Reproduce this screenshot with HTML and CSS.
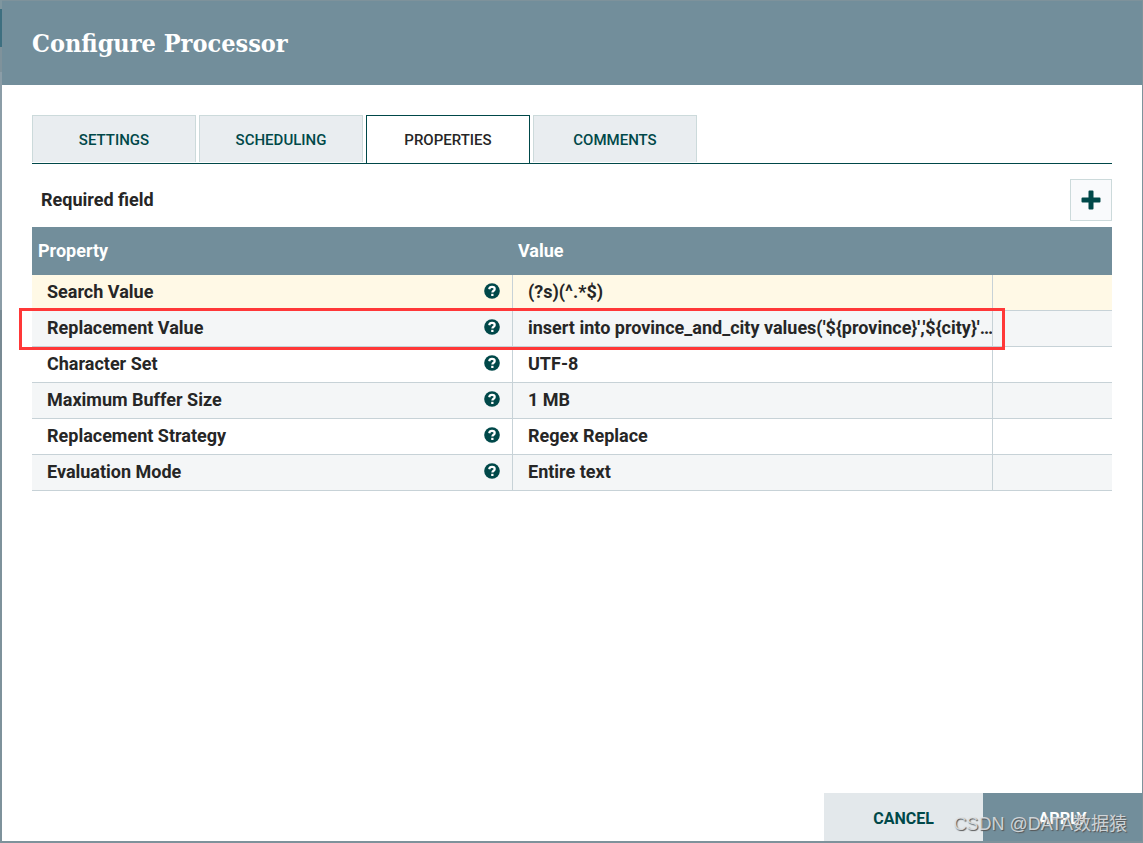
FILE: index.html
```html
<!DOCTYPE html>
<html lang="en">
<head>
<meta charset="utf-8">
<title>Configure Processor</title>
<link rel="stylesheet" href="styles.css">
</head>
<body>
<svg class="defs" aria-hidden="true">
  <symbol id="help" viewBox="0 0 16 16">
    <circle cx="8" cy="8" r="7.800" fill="#004849"/>
    <path d="M5.200 6.200C5.500 4.600 6.500 3.900 8 3.900c1.600 0 2.700.8 2.700 2.100 0 1.800-2.300 1.700-2.300 3.500" fill="none" stroke="#fff" stroke-width="2.200"/>
    <rect x="7.200" y="10.800" width="2.300" height="2.200" fill="#fff"/>
  </symbol>
</svg>
<main class="dialog">
  <header class="dialog-header"><h1>Configure Processor</h1></header>
  <div class="dialog-content">
    <nav class="tabs" role="tablist">
      <button class="tab" role="tab">SETTINGS</button>
      <button class="tab" role="tab">SCHEDULING</button>
      <button class="tab selected" role="tab" aria-selected="true">PROPERTIES</button>
      <button class="tab" role="tab">COMMENTS</button>
    </nav>
    <div class="toolbar">
      <span>Required field</span>
      <button class="add" aria-label="Add property"><svg viewBox="0 0 20 20" width="20" height="20"><path d="M8.500.5h3q1 0 1 1V7.500h6q1 0 1 1v3q0 1-1 1h-6v6q0 1-1 1h-3q-1 0-1-1v-6h-6q-1 0-1-1v-3q0-1 1-1h6v-6q0-1 1-1z" fill="#004849"/></svg></button>
    </div>
    <table class="properties">
      <thead><tr><th class="name">Property</th><th class="value">Value</th><th></th></tr></thead>
      <tbody>
        <tr class="active"><td><div class="cell">Search Value<svg class="help"><use href="#help"/></svg></div></td><td>(?s)(^.*$)</td><td></td></tr>
        <tr class="marked"><td><div class="cell">Replacement Value<svg class="help"><use href="#help"/></svg></div></td><td>insert into province_and_city values('${province}','${city}'…</td><td></td></tr>
        <tr><td><div class="cell">Character Set<svg class="help"><use href="#help"/></svg></div></td><td>UTF-8</td><td></td></tr>
        <tr><td><div class="cell">Maximum Buffer Size<svg class="help"><use href="#help"/></svg></div></td><td>1 MB</td><td></td></tr>
        <tr><td><div class="cell">Replacement Strategy<svg class="help"><use href="#help"/></svg></div></td><td>Regex Replace</td><td></td></tr>
        <tr><td><div class="cell">Evaluation Mode<svg class="help"><use href="#help"/></svg></div></td><td>Entire text</td><td></td></tr>
      </tbody>
    </table>
  </div>
  <footer class="actions">
    <button class="action cancel">CANCEL</button>
    <button class="action apply">APPLY</button>
  </footer>
</main>
<div class="watermark">CSDN @DATA数据猿</div>
</body>
</html>
```
FILE: styles.css
```css
* { box-sizing: border-box; }

body {
  margin: 0;
  min-height: 100vh;
  display: flex;
  padding: 1px 1px 2px 2px;
  overflow: hidden;
  color: #262626;
  font: 700 18px/24px Roboto, sans-serif;
  background: #7e929b linear-gradient(#7f969f 0 9px, #3d6f80 9px 47px, #7f929b 47px 72px, #8b9da7 72px 310px, #788a93 310px 370px, #7e929b 370px) left / 2px 100% no-repeat;
}

button {
  margin: 0;
  padding: 0;
  border: 0;
  font: 500 16px/24px Roboto, sans-serif;
  color: #004849;
}

.defs { position: absolute; width: 0; height: 0; }

.dialog {
  flex: 1;
  min-width: 0;
  display: flex;
  flex-direction: column;
  background: #fff;
}

.dialog-header {
  height: 84px;
  padding: 2px 30px 0;
  display: flex;
  align-items: center;
  background: #728e9b;
}

h1 {
  margin: 0;
  color: #fff;
  font: 700 25px/36px "Roboto Slab", "DejaVu Serif Condensed", "DejaVu Serif", serif;
}

.dialog-content { flex: 1; padding: 30px 30px 0; }

.tabs {
  display: flex;
  gap: 3px;
  height: 49px;
  border-bottom: 1px solid #004849;
}

.tab {
  width: 164px;
  height: 47px;
  padding-top: 2px;
  border: 1px solid #ccdadb;
  border-bottom: 0;
  background: #e9edf0;
  font-size: 15px;
}

.tab.selected {
  height: 48px;
  padding-top: 0;
  border-color: #004849;
  background: #fff;
  color: #262626;
}

.toolbar {
  display: flex;
  align-items: center;
  justify-content: space-between;
  padding: 15px 0 6px 9px;
}

.add {
  width: 42px;
  height: 42px;
  display: grid;
  place-items: center;
  border: 1px solid #ccdadb;
  background: #f9fafc;
}

.properties {
  width: 100%;
  table-layout: fixed;
  border-collapse: separate;
  border-spacing: 0;
}

th {
  height: 48px;
  padding: 0 6px;
  text-align: left;
  font-weight: 700;
  color: #fff;
  background: #728e9b;
}

.name { width: 481px; }
.value { width: 480px; padding-left: 5px; }

td {
  height: 36px;
  padding: 0 0 2px 15px;
  border-right: 1px solid #c7d2d7;
  border-bottom: 1px solid #c7d2d7;
  overflow: hidden;
  white-space: nowrap;
}

td:last-child { border-right: 0; }
tbody tr:nth-child(even) { background: #f4f6f7; }
tbody tr.active { background: #fff9e6; }

.cell {
  display: flex;
  align-items: flex-start;
  justify-content: space-between;
  padding-right: 12px;
}

.help { width: 16px; height: 16px; margin-top: 3px; }

.marked { position: relative; }

.marked td:first-child::after {
  content: "";
  position: absolute;
  inset: -3px 107px -3px -13px;
  border: 3px solid #ff3838;
}

.actions { display: flex; justify-content: flex-end; }

.action { width: 159px; height: 48px; padding-top: 3px; font-weight: 700; }
.cancel { background: #e3e8eb; }
.apply { background: #728e9b; color: #fff; }

.watermark {
  position: absolute;
  right: 16px;
  bottom: 6px;
  color: rgba(225, 228, 230, 0.85);
  font: 400 18px/26px "Liberation Sans", "Noto Sans CJK SC", sans-serif;
  text-shadow: 1px 1px 1px #555;
}
```
